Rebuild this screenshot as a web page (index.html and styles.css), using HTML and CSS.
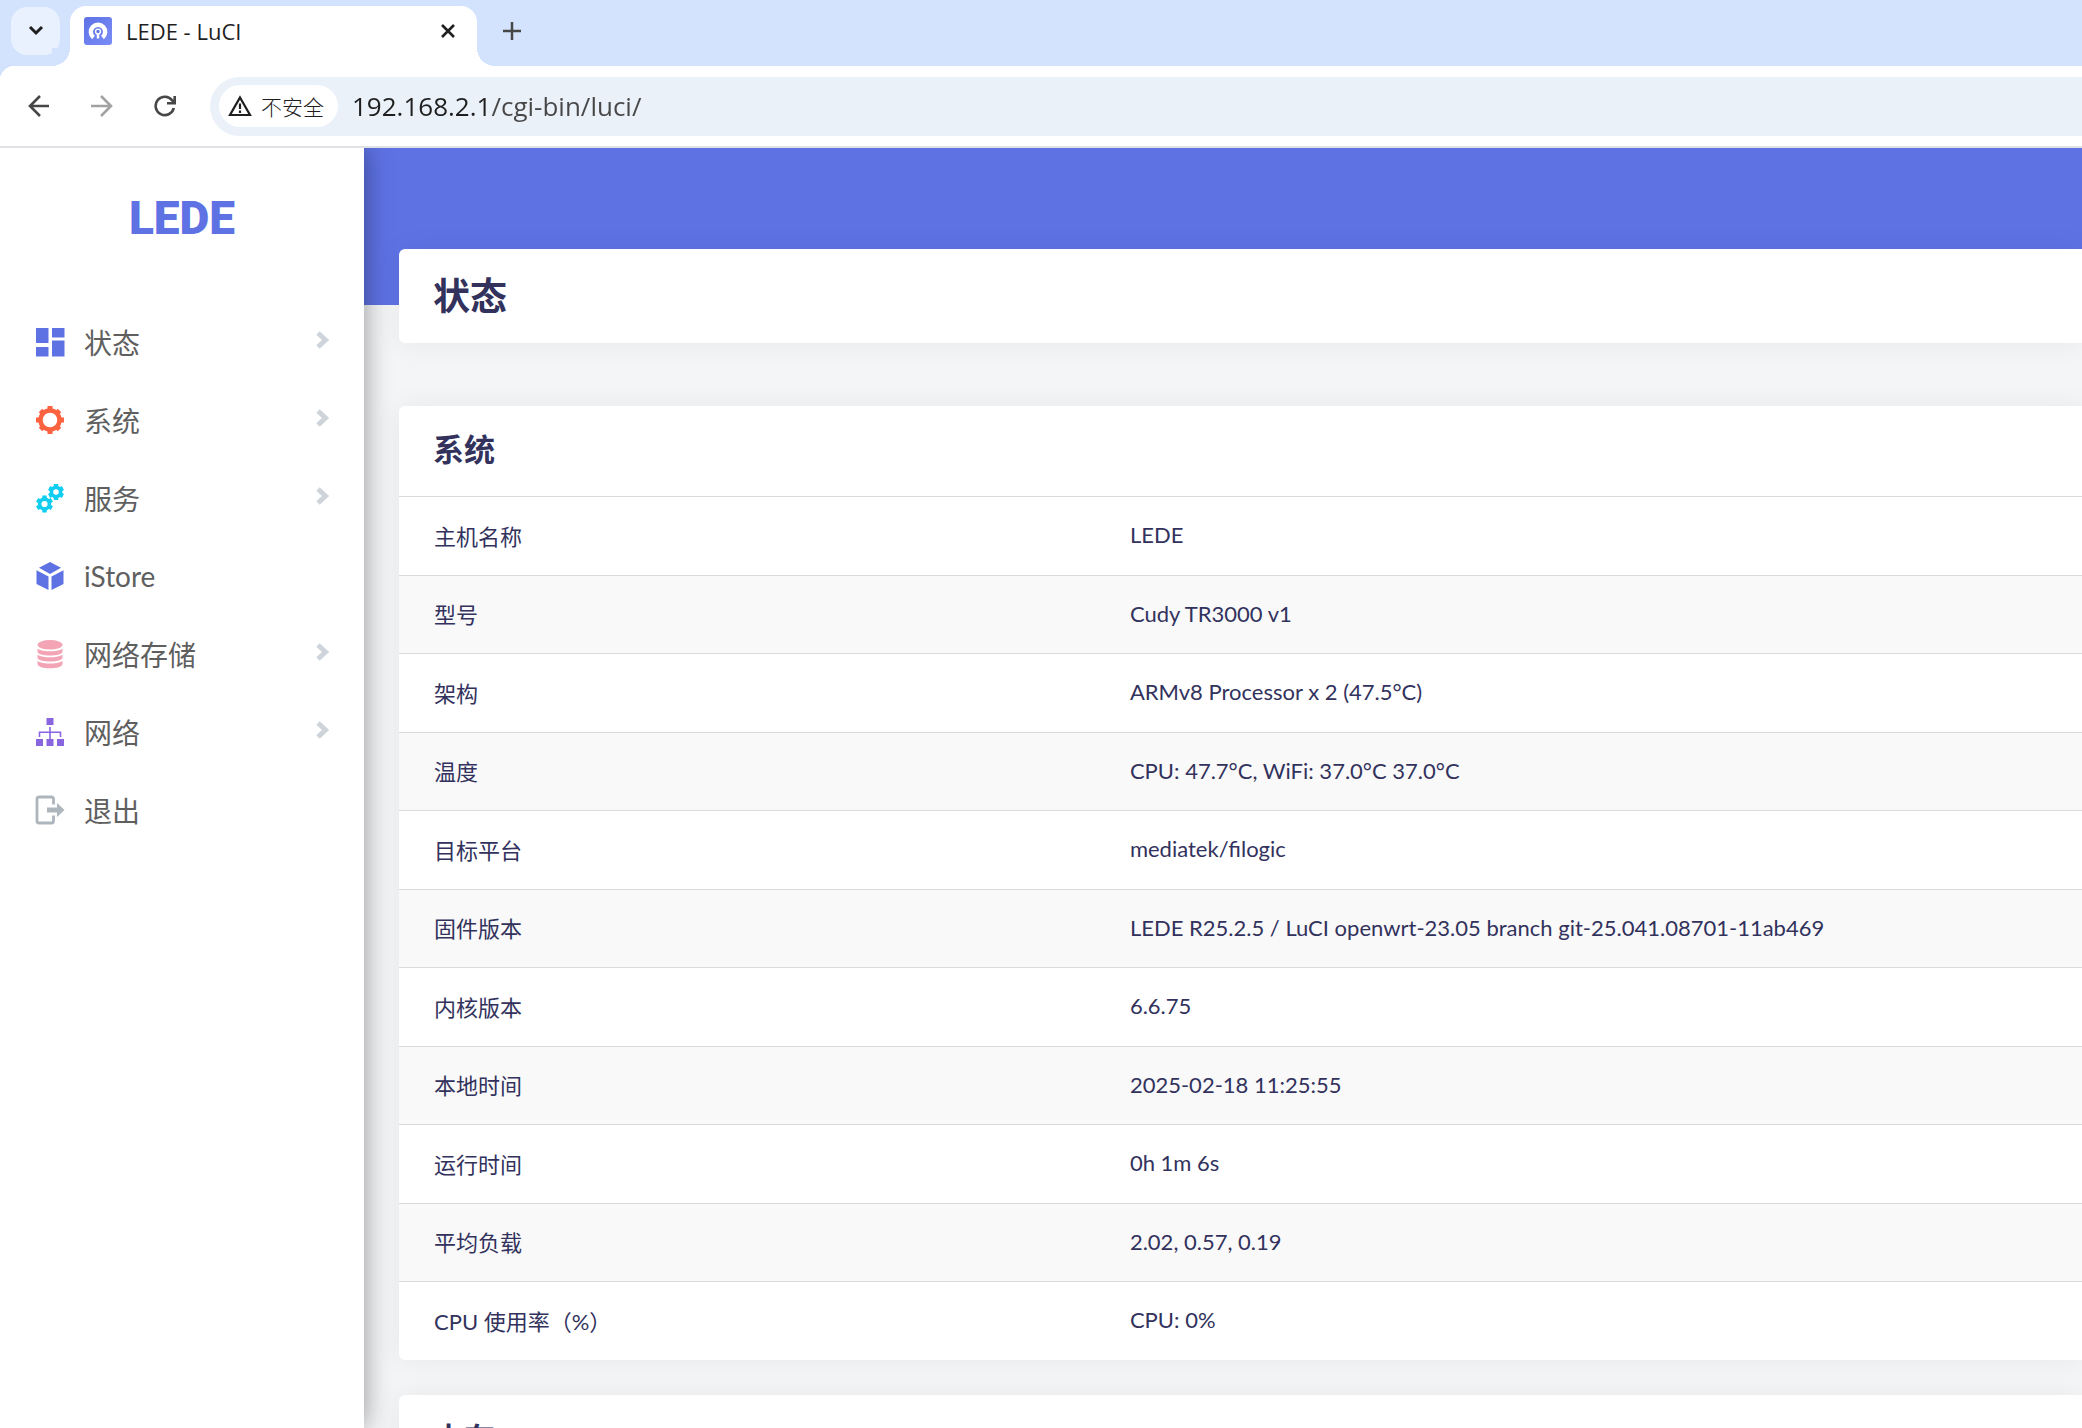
FILE: index.html
```html
<!DOCTYPE html>
<html lang="zh-CN">
<head>
    <meta charset="UTF-8">
    <meta name="viewport" content="width=device-width, initial-scale=1.0">
    <title>LEDE - LuCI</title>
    <link rel="stylesheet" href="styles.css">
</head>
<body>
    <div class="tab-strip">
        <button class="tab-search" aria-label="搜索标签页">
            <svg width="16" height="12" viewBox="0 0 16 12"><path d="M2 2l6 6 6-6" fill="none" stroke="#1f1f1f" stroke-width="3"/></svg>
        </button>
        <div class="tab">
            <svg class="favicon" width="28" height="28" viewBox="0 0 28 28">
                <defs>
                    <linearGradient id="fav" x1="0" y1="0" x2="1" y2="1">
                        <stop offset="0" stop-color="#5e72e4"/>
                        <stop offset="1" stop-color="#7a8cf8"/>
                    </linearGradient>
                </defs>
                <rect width="28" height="28" rx="3" fill="url(#fav)"/>
                <path d="M9.500 20.500A7.200 7.200 0 1 1 18.500 20.500" fill="none" stroke="#fff" stroke-width="4.400"/>
                <circle cx="14" cy="14.500" r="2.400" fill="#5e72e4" stroke="#fff" stroke-width="1.400"/>
                <path d="M14 17v4.500" stroke="#fff" stroke-width="2.400"/>
            </svg>
            <span class="tab-title">LEDE - LuCI</span>
            <button class="tab-close" aria-label="关闭">
                <svg width="14" height="14" viewBox="0 0 14 14"><path d="M1 1l12 12M13 1L1 13" stroke="#1f1f1f" stroke-width="2.600"/></svg>
            </button>
        </div>
        <button class="tab-new" aria-label="新标签页">
            <svg width="18" height="18" viewBox="0 0 18 18"><path d="M9 0v18M0 9h18" stroke="#474747" stroke-width="2.500"/></svg>
        </button>
    </div>

    <div class="toolbar">
        <button class="nav-button" aria-label="后退">
            <svg width="22" height="22" viewBox="0 0 22 22"><path d="M21 11H2M12 1L2 11l10 10" fill="none" stroke="#474747" stroke-width="2.600"/></svg>
        </button>
        <button class="nav-button disabled" aria-label="前进">
            <svg width="22" height="22" viewBox="0 0 22 22"><path d="M0 11h20M10 1l10 10-10 10" fill="none" stroke="#474747" stroke-width="2.600"/></svg>
        </button>
        <button class="nav-button" aria-label="重新加载">
            <svg width="22" height="22" viewBox="0 0 22 22"><path d="M19.800 13A9.200 9.200 0 1 1 18.300 5.500L20 7.800M20.700 1v7.200H13" fill="none" stroke="#474747" stroke-width="2.600"/></svg>
        </button>
        <div class="address">
            <button class="security">
                <svg width="24" height="22" viewBox="0 0 24 22"><path d="M12 2.500L22 20H2z" fill="none" stroke="#1f1f1f" stroke-width="2.200"/><path d="M12 8.500v5.500M12 15.500v2.500" stroke="#1f1f1f" stroke-width="2.200"/></svg>
                <span>不安全</span>
            </button>
            <input class="url" type="text" value="192.168.2.1/cgi-bin/luci/" aria-label="地址">
        </div>
    </div>

    <div class="page">
        <aside class="sidebar">
            <a class="brand" href="#">LEDE</a>
            <nav>
                <ul class="menu">
                    <li>
                        <a href="#">
                            <svg class="icon" viewBox="0 0 28 28" fill="#5e72e4"><path d="M0 0h12.500v15H0zM0 19h12.500v9.500H0zM16 0h12.500v9.500H16zM16 12.500h12.500v16H16z"/></svg>
                            <span>状态</span>
                            <svg class="arrow" viewBox="0 0 12 18"><path d="M2 2l7.500 7L2 16"/></svg>
                        </a>
                    </li>
                    <li>
                        <a href="#">
                            <svg class="icon" viewBox="0 0 28 28" stroke="#fb6340" fill="none">
                                <circle cx="14" cy="14" r="9.500" stroke-width="4.500"/>
                                <path d="M14 0v5M14 23v5M0 14h5M23 14h5M4.500 4.500l3 3M20.500 20.500l3 3M4.500 23.500l3-3M20.500 7.500l3-3" stroke-width="5"/>
                            </svg>
                            <span>系统</span>
                            <svg class="arrow" viewBox="0 0 12 18"><path d="M2 2l7.500 7L2 16"/></svg>
                        </a>
                    </li>
                    <li>
                        <a href="#">
                            <svg class="icon" viewBox="0 0 28 28" stroke="#11cdef" fill="none">
                                <circle cx="8.500" cy="20" r="4.900" stroke-width="3.600"/>
                                <path d="M8.500 11.500v3M8.500 25.500v3M1.100 15.800l2.600 1.500M13.300 22.700l2.600 1.500M1.100 24.200l2.600-1.500M13.300 17.300l2.600-1.500" stroke-width="4.400"/>
                                <circle cx="20" cy="8" r="4.600" stroke-width="3.600"/>
                                <path d="M20 0v3M20 13v3M13.100 4l2.600 1.500M24.300 10.500l2.600 1.500M13.100 12l2.600-1.500M24.300 5.500l2.600-1.500" stroke-width="4.400"/>
                            </svg>
                            <span>服务</span>
                            <svg class="arrow" viewBox="0 0 12 18"><path d="M2 2l7.500 7L2 16"/></svg>
                        </a>
                    </li>
                    <li>
                        <a href="#">
                            <svg class="icon" viewBox="0 0 28 28" fill="#5e72e4"><path d="M14 0l11 5.700L14 12 3 5.700zM.500 8.200l12 6.300V28l-12-6zM15.500 14.500l12-6.300V22l-12 6z"/></svg>
                            <span>iStore</span>
                        </a>
                    </li>
                    <li>
                        <a href="#">
                            <svg class="icon" viewBox="0 0 28 28" fill="#f3a4b5">
                                <ellipse cx="14" cy="4.800" rx="12.500" ry="4.800"/>
                                <path d="M1.500 8.800c3 2 8 2.500 12.500 2.500s9.500-.500 12.500-2.500v2.700c0 2.700-6 4-12.500 4s-12.500-1.300-12.500-4z"/>
                                <path d="M1.500 14.800c3 2 8 2.500 12.500 2.500s9.500-.500 12.500-2.500v2.700c0 2.700-6 4-12.500 4s-12.500-1.300-12.500-4z"/>
                                <path d="M1.500 21c3 2 8 2.500 12.500 2.500s9.500-.500 12.500-2.500v3c0 2.700-6 4.300-12.500 4.300s-12.500-1.600-12.500-4.300z"/>
                            </svg>
                            <span>网络存储</span>
                            <svg class="arrow" viewBox="0 0 12 18"><path d="M2 2l7.500 7L2 16"/></svg>
                        </a>
                    </li>
                    <li>
                        <a href="#">
                            <svg class="icon" viewBox="0 0 28 28" fill="#8965e0">
                                <path d="M10.500 0h7v7h-7zM0 21h7v7H0zM10.500 21h7v7h-7zM21 21h7v7h-7z"/>
                                <path d="M14 9v12M3.500 19v-4.700h21V19" fill="none" stroke="#8965e0" stroke-width="1.600"/>
                            </svg>
                            <span>网络</span>
                            <svg class="arrow" viewBox="0 0 12 18"><path d="M2 2l7.500 7L2 16"/></svg>
                        </a>
                    </li>
                    <li>
                        <a href="#">
                            <svg class="icon" viewBox="0 0 28 28">
                                <path d="M17.500 8.500V3q0-2-2-2H3Q1 1 1 3v22q0 2 2 2h12.500q2 0 2-2v-5.500" fill="none" stroke="#adb5bd" stroke-width="2.800"/>
                                <path d="M11 11.500h10V7l7.500 7-7.500 7v-4.500H11z" fill="#adb5bd"/>
                            </svg>
                            <span>退出</span>
                        </a>
                    </li>
                </ul>
            </nav>
        </aside>

        <main class="main">
            <header class="banner"></header>
            <div class="content">
                <section class="card title-card">
                    <h1>状态</h1>
                </section>

                <section class="card">
                    <h2>系统</h2>
                    <table>
                        <tbody>
                            <tr>
                                <th scope="row">主机名称</th>
                                <td>LEDE</td>
                            </tr>
                            <tr>
                                <th scope="row">型号</th>
                                <td>Cudy TR3000 v1</td>
                            </tr>
                            <tr>
                                <th scope="row">架构</th>
                                <td>ARMv8 Processor x 2 (47.5°C)</td>
                            </tr>
                            <tr>
                                <th scope="row">温度</th>
                                <td>CPU: 47.7°C, WiFi: 37.0°C 37.0°C</td>
                            </tr>
                            <tr>
                                <th scope="row">目标平台</th>
                                <td>mediatek/filogic</td>
                            </tr>
                            <tr>
                                <th scope="row">固件版本</th>
                                <td>LEDE R25.2.5 / LuCI openwrt-23.05 branch git-25.041.08701-11ab469</td>
                            </tr>
                            <tr>
                                <th scope="row">内核版本</th>
                                <td>6.6.75</td>
                            </tr>
                            <tr>
                                <th scope="row">本地时间</th>
                                <td>2025-02-18 11:25:55</td>
                            </tr>
                            <tr>
                                <th scope="row">运行时间</th>
                                <td>0h 1m 6s</td>
                            </tr>
                            <tr>
                                <th scope="row">平均负载</th>
                                <td>2.02, 0.57, 0.19</td>
                            </tr>
                            <tr>
                                <th scope="row">CPU 使用率（%）</th>
                                <td>CPU: 0%</td>
                            </tr>
                        </tbody>
                    </table>
                </section>

                <section class="card">
                    <h2>内存</h2>
                </section>
            </div>
        </main>
    </div>
</body>
</html>
```
FILE: styles.css
```css
* {
    box-sizing: border-box;
}

body {
    display: flex;
    flex-direction: column;
    height: 100vh;
    margin: 0;
    overflow: hidden;
    background-color: #f4f5f7;
    color: #32325d;
    font-family: Lato, "Noto Sans CJK SC", sans-serif;
    font-size: 22px;
}

button {
    display: flex;
    align-items: center;
    justify-content: center;
    padding: 0;
    border: none;
    background: none;
    cursor: pointer;
}

svg {
    display: block;
    flex-shrink: 0;
}

/* Browser tabs */
.tab-strip {
    display: flex;
    align-items: flex-end;
    flex-shrink: 0;
    height: 66px;
    padding-left: 11px;
    background-color: #d3e3fd;
}

.tab-search {
    width: 49px;
    height: 48px;
    margin: 0 10px 11px 0;
    border-radius: 16px;
    background-color: #e9f1fe;
}

.tab {
    position: relative;
    display: flex;
    align-items: center;
    width: 407px;
    height: 60px;
    padding: 0 22px 10px 14px;
    border-radius: 16px 16px 0 0;
    background-color: #fff;
}

/* flared bottom corners */
.tab::before,
.tab::after {
    content: "";
    position: absolute;
    bottom: 0;
    width: 18px;
    height: 18px;
}

.tab::before {
    left: -18px;
    background: radial-gradient(circle at 0 0, #d3e3fd 18px, #fff 18px);
}

.tab::after {
    right: -18px;
    background: radial-gradient(circle at 100% 0, #d3e3fd 18px, #fff 18px);
}

.tab-title {
    flex: 1;
    margin-left: 14px;
    color: #1f1f1f;
    font-family: "Open Sans", sans-serif;
}

.tab-new {
    width: 48px;
    height: 48px;
    margin: 0 0 11px 11px;
}

/* Browser toolbar */
.toolbar {
    display: flex;
    align-items: center;
    flex-shrink: 0;
    height: 82px;
    padding-left: 28px;
    border-bottom: 2px solid #dfe1e5;
    background: radial-gradient(circle at 14px 14px, #fff 14px, #d3e3fd 14px) 0 0 / 14px 14px no-repeat #fff;
}

.nav-button {
    width: 22px;
    height: 22px;
    margin-right: 41px;
}

.nav-button.disabled {
    opacity: 0.5;
}

.address {
    display: flex;
    align-items: center;
    flex: 1;
    height: 59px;
    margin-left: -7px;
    padding-left: 9px;
    border-radius: 30px 0 0 30px;
    background-color: #eaf1f9;
}

.security {
    justify-content: flex-start;
    gap: 9px;
    width: 119px;
    height: 42px;
    padding-left: 9px;
    border-radius: 21px;
    background-color: #fff;
    color: #1f1f1f;
    font-family: "Noto Sans CJK SC", sans-serif;
    font-size: 21px;
    font-weight: 300;
}

.url {
    flex: 1;
    height: 59px;
    margin-left: 14px;
    padding: 0;
    border: none;
    outline: none;
    /* host part is darker than the path */
    background: linear-gradient(90deg, #1f1f1f 138px, #474747 138px);
    -webkit-background-clip: text;
    background-clip: text;
    color: transparent;
    font-family: "Open Sans", sans-serif;
    font-size: 26px;
}

/* Page */
.page {
    display: flex;
    flex: 1;
    min-height: 0;
    overflow: hidden;
}

.sidebar {
    position: relative;
    z-index: 1;
    flex-shrink: 0;
    width: 364px;
    background-color: #fff;
    box-shadow: 0 0 26px rgba(0, 0, 0, 0.4);
}

.brand {
    display: block;
    height: 155px;
    color: #5e72e4;
    font-family: Roboto, sans-serif;
    font-size: 46px;
    font-weight: 900;
    line-height: 140px;
    text-align: center;
    text-decoration: none;
}

.menu {
    margin: 0;
    padding: 0;
    list-style: none;
}

.menu a {
    display: flex;
    align-items: center;
    height: 78px;
    padding: 0 36px;
    color: #5f5f5f;
    font-size: 28px;
    text-decoration: none;
}

.menu span {
    flex: 1;
}

.menu a:hover {
    background-color: #f6f9fc;
}

.icon {
    width: 28px;
    height: 28px;
    margin-right: 20px;
    overflow: visible;
}

.arrow {
    width: 12px;
    height: 18px;
    margin-bottom: 4px;
    overflow: visible;
}

.arrow path {
    fill: none;
    stroke: #ced4da;
    stroke-width: 5;
}

.main {
    flex: 1;
    min-width: 0;
}

.banner {
    height: 157px;
    background-color: #5e72e4;
}

.content {
    margin-top: -56px;
    padding-left: 35px;
}

.card {
    margin-bottom: 35px;
    border-radius: 6px 0 0 6px;
    background-color: #fff;
    box-shadow: 0 0 28px rgba(0, 0, 0, 0.06);
    overflow: hidden;
}

.title-card {
    margin-bottom: 63px;
}

h1,
h2 {
    margin: 0;
    padding-left: 34px;
    font-weight: 700;
}

h1 {
    font-size: 37px;
    line-height: 94px;
}

h2 {
    padding-bottom: 4px;
    font-size: 31px;
    line-height: 86px;
}

table {
    width: 100%;
    table-layout: fixed;
    border-collapse: separate;
    border-spacing: 0;
}

th,
td {
    height: 79px;
    padding: 0 0 3px 35px;
    border-top: 1px solid #dadbdd;
    font-weight: 400;
    text-align: left;
}

th {
    width: 41.35%;
}

tr:nth-child(even) th,
tr:nth-child(even) td {
    height: 78px;
    background-color: #f9f9f9;
}
```
